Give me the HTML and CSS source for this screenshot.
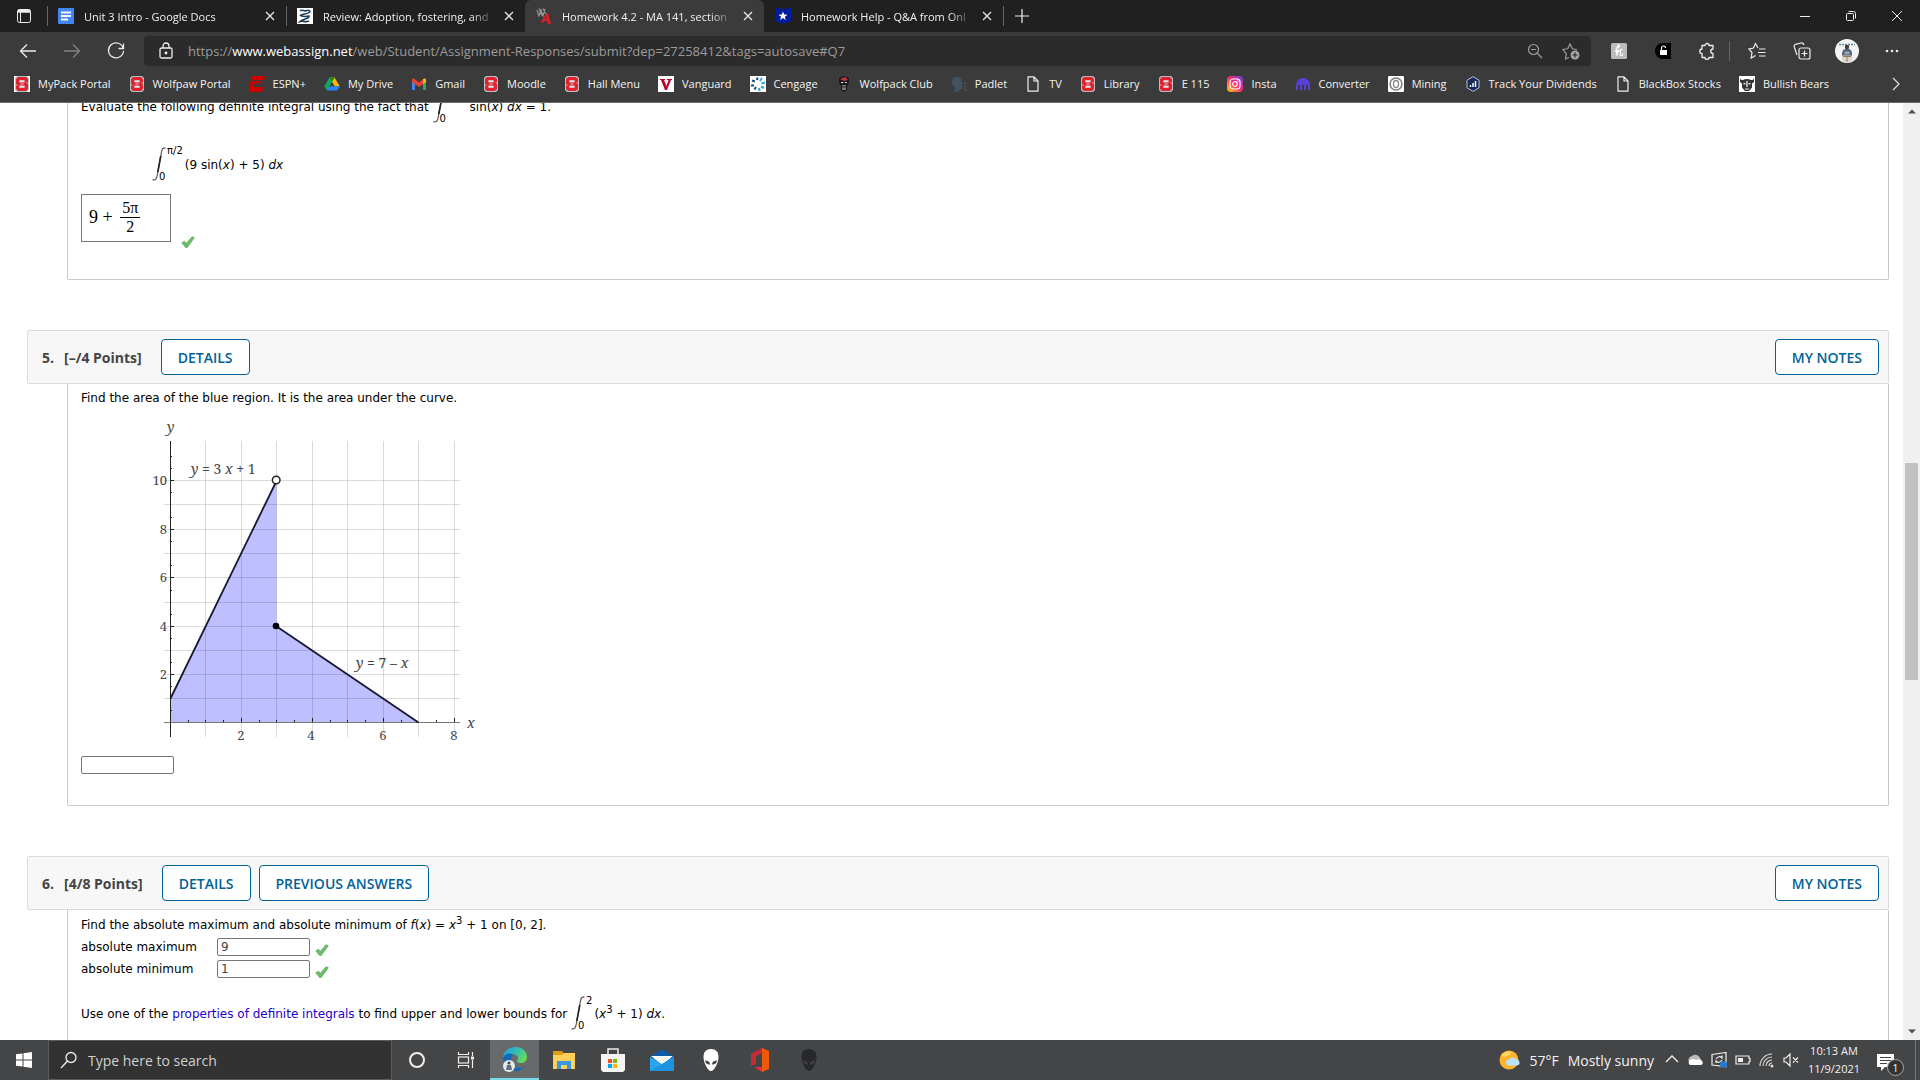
FILE: index.html
```html
<!DOCTYPE html>
<html lang="en">
<head>
    <meta charset="UTF-8">
    <meta name="viewport" content="width=device-width, initial-scale=1.0">
    <title>Homework 4.2 - MA 141, section</title>
    <link rel="stylesheet" href="styles.css">
</head>
<body>
    <!-- Shared icons -->
    <svg class="sprite" aria-hidden="true">
        <symbol id="close" viewBox="0 0 16 16"><path d="M4 4l8 8M12 4l-8 8" stroke="#e8e8e8" stroke-width="1.3" fill="none"/></symbol>
        <symbol id="check" viewBox="0 0 14 12"><path d="M.8 6.800l2.700-1.500 2 1.900L11 .8l2.300.9-7 9.700H4.500z" fill="#6fbd6a" stroke="#5aa657" stroke-width=".7" stroke-linejoin="round"/></symbol>
        <symbol id="integral" viewBox="0 0 14 34"><path d="M13.500 1.200C10.500.5 10 2 9.300 6L5.300 28c-.7 4-1.800 5.500-4.800 4.800" fill="none" stroke="#555" stroke-width="1.200"/><path d="M8.800 9L5.800 25" stroke="#222" stroke-width="1.600"/></symbol>
        <symbol id="pack" viewBox="0 0 16 16"><path d="M3 0h10l2 2v12l-2 2H3l-2-2V2z" fill="#b9c0c2"/><path d="M4 1h8l2 2v3.500h-3.500V4.500h-5v2H12l2 1.500v5l-2 2H4l-2-2V9.500h3.500v2h5v-2H4L2 8V3z" fill="#e3222f"/><path d="M5.500 4.500h5v1.200h-5zM5.500 10.300h5v1.200h-5z" fill="#fff"/><path d="M6.500 8h3" stroke="#fff" stroke-width=".7"/></symbol>
        <symbol id="page" viewBox="0 0 16 16"><path d="M3 .8h6L13 5v10.200H3zM9 .8V5h4" fill="none" stroke="#eee" stroke-width="1.200" stroke-linejoin="round"/></symbol>
        <symbol id="alien" viewBox="0 0 16 22"><path d="M8 0c5 0 7.500 3 7.500 8 0 6-4.500 14-7.500 14S.5 14 .5 8C.5 3 3 0 8 0z"/><path d="M2 11.500c3 0 5 1.500 5 4-2.500.3-4.500-1-5-4zM14 11.500c-3 0-5 1.500-5 4 2.500.3 4.500-1 5-4z" fill="#404143"/></symbol>
    </svg>

    <!-- Tabs -->
    <div class="tab-bar">
        <button class="tab-actions" aria-label="Tab actions"><svg width="16" height="16" viewBox="0 0 16 16" fill="none" stroke="#eee"><rect x="1.500" y="1.500" width="13" height="13" rx="2"/><path d="M2 2.500h12M2 4h12" stroke-width="1.500"/><path d="M4.500 4v10"/></svg></button>
        <div class="tab">
            <svg class="favicon" viewBox="0 0 16 16"><rect width="16" height="16" rx="1" fill="#4285f4"/><path d="M3 4.500h10M3 8h10M3 11.500h7" stroke="#fff" stroke-width="1.800"/></svg>
            <span class="tab-title">Unit 3 Intro - Google Docs</span>
            <button class="tab-close" aria-label="Close tab"><svg><use href="#close"/></svg></button>
        </div>
        <div class="tab">
            <svg class="favicon" viewBox="0 0 16 16"><rect width="16" height="16" fill="#fff"/><path d="M3 3c2-2 4 .5 6-.3 2-.7 3.500-.2 4 .8-1.500 3-8 2-9.500 4 2.500 1 4.500 1.500 8.500.5 1 3-7 2.500-9 5.500 3-1.500 5 1.500 9-.5" fill="none" stroke="#1c3f5e" stroke-width="1.600"/></svg>
            <span class="tab-title">Review: Adoption, fostering, and</span>
            <button class="tab-close" aria-label="Close tab"><svg><use href="#close"/></svg></button>
        </div>
        <div class="tab active">
            <svg class="favicon" viewBox="0 0 16 16"><path d="M1 2l2 6 2-6 2 6 2-7M3 .5l3 7M7 .5l3 6" fill="none" stroke="#999" stroke-width="1.100"/><path d="M5 14l5-8 2-1 3 11h-3l-.7-3H8.500l-1.500 2z" fill="#e51c23"/><path d="M10.500 8.500l-1.300 2.500h1.800z" fill="#3b3b3b"/></svg>
            <span class="tab-title">Homework 4.2 - MA 141, section</span>
            <button class="tab-close" aria-label="Close tab"><svg><use href="#close"/></svg></button>
        </div>
        <div class="tab">
            <svg class="favicon" viewBox="0 0 16 16"><path d="M0 0l8 1 8-1v13l-8 3-8-3z" fill="#001c9c"/><path d="M8 3.500l1.200 3 3.300.2-2.600 2 .9 3.200L8 10.100l-2.800 1.800.9-3.200-2.600-2 3.300-.2z" fill="#fff"/></svg>
            <span class="tab-title">Homework Help - Q&amp;A from Onl</span>
            <button class="tab-close" aria-label="Close tab"><svg><use href="#close"/></svg></button>
        </div>
        <button class="new-tab" aria-label="New tab"><svg width="16" height="16" viewBox="0 0 16 16" stroke="#eee" stroke-width="1.200"><path d="M8 1v14M1 8h14"/></svg></button>
        <div class="window-controls">
            <button aria-label="Minimize"><svg viewBox="0 0 12 12"><path d="M1 6.500h10"/></svg></button>
            <button aria-label="Restore"><svg viewBox="0 0 12 12"><rect x="1.500" y="3.500" width="7" height="7" rx="1"/><path d="M3.500 1.500h5q2 0 2 2v5"/></svg></button>
            <button aria-label="Close"><svg viewBox="0 0 12 12"><path d="M1 1l10 10M11 1L1 11"/></svg></button>
        </div>
    </div>

    <!-- Toolbar -->
    <div class="toolbar">
        <div class="nav-buttons">
            <button aria-label="Back"><svg viewBox="0 0 18 18"><path d="M17 9H1.500M8 2.500L1.500 9 8 15.500"/></svg></button>
            <button aria-label="Forward" disabled><svg viewBox="0 0 18 18"><path d="M1 9h15.500M10 2.500L16.500 9 10 15.500"/></svg></button>
            <button aria-label="Refresh"><svg viewBox="0 0 18 18"><path d="M16.300 6.500A7.500 7.500 0 1 0 16.500 9M16.500 1.500v5h-5"/></svg></button>
        </div>
        <div class="address-bar">
            <svg class="lock" viewBox="0 0 16 18" fill="none" stroke="#eee" stroke-width="1.300"><rect x="2" y="6" width="12" height="10" rx="1.500"/><path d="M5 6V4a3 3 0 0 1 6 0v2"/><circle cx="8" cy="11" r=".8" fill="#eee"/></svg>
            <div class="url">https://<b>www.webassign.net</b>/web/Student/Assignment-Responses/submit?dep=27258412&amp;tags=autosave#Q7</div>
            <div class="address-actions">
                <button aria-label="Zoom out"><svg width="16" height="16" viewBox="0 0 16 16" fill="none" stroke="#9a9a9a" stroke-width="1.200"><circle cx="6.500" cy="6.500" r="5"/><path d="M10 10l5 5M4 6.500h5"/></svg></button>
                <button aria-label="Add to favorites"><svg width="18" height="18" viewBox="0 0 18 18" fill="none" stroke="#9a9a9a" stroke-width="1.200"><path d="M7 15.500l-3.500 1.500.8-5L1 7.500l4.700-.7L8 2l2.300 4.800L15 7.500"/><circle cx="13" cy="13" r="4.500" fill="#a5a5a5" stroke="none"/><path d="M13 10.500v5M10.500 13h5" stroke="#2b2b2b"/></svg></button>
            </div>
        </div>
        <div class="extensions">
            <button aria-label="Honey"><svg width="16" height="16" viewBox="0 0 16 16"><rect width="16" height="16" rx="1.500" fill="#bcbcbc"/><path d="M4.500 5.500c3-.5 5-3 3.500-3.500S5.500 6 5.500 12.500c1-4 3.500-6 4-4.500.4 1.300-1.300 4 0 4.500 1 .3 2-.8 2.500-1.800M3.500 8c3 .5 6-.5 7.500-2" fill="none" stroke="#fff" stroke-width="1.200"/></svg></button>
            <button aria-label="Unlock"><svg width="16" height="16" viewBox="0 0 16 16"><path d="M8 0h8v16H8A8 8 0 0 1 8 0z" fill="#000"/><rect x="5" y="7" width="7" height="5" fill="#fff"/><path d="M6.500 7V5a2 2 0 0 1 4 0" fill="none" stroke="#fff" stroke-width="1.200"/></svg></button>
            <button aria-label="Extensions"><svg width="18" height="18" viewBox="0 0 18 18" fill="none" stroke="#eee" stroke-width="1.300"><path d="M4 3.500h3a2 2 0 0 1 4 0h4V7a2 2 0 0 0 0 4.500v4h-4a2 2 0 0 1-4 0H4v-4A2 2 0 0 1 4 7z" stroke-linejoin="round"/></svg></button>
        </div>
        <div class="browser-menu">
            <button aria-label="Favorites"><svg width="18" height="18" viewBox="0 0 18 18" fill="none" stroke="#eee" stroke-width="1.200"><path d="M10 6L7.500 1.500 5.500 6 1 7l3 3.500-.8 5.500 4.300-2.500M11 7h6.500M10 10.500h7.500M11 14h6.500"/></svg></button>
            <button aria-label="Collections"><svg width="18" height="18" viewBox="0 0 18 18" fill="none" stroke="#eee" stroke-width="1.200"><rect x="6" y="6" width="11" height="11" rx="2"/><path d="M11.500 8.500v6M8.500 11.500h6M4 13L1.300 5q-.6-2 1.200-2.700L8 1q2-.5 3 2"/></svg></button>
            <button aria-label="Profile"><svg width="24" height="24" viewBox="0 0 24 24"><circle cx="12" cy="12" r="12" fill="#f2f4f5"/><path d="M4 5.500h16" stroke="#6489a0" stroke-width="1.500" stroke-dasharray="2 1"/><path d="M7 15q0-4 3-5h4q3 1 3 5v3H7z" fill="#53637c"/><circle cx="12" cy="8" r="2.200" fill="#463c39"/><path d="M9.500 12.500h5v3h-5z" fill="#9ca6ae"/><path d="M7 16.500h10V22q-5 2-10 0z" fill="#dcd6c6"/><path d="M8 17.500h8M12 17v6" stroke="#8b7f5d"/></svg></button>
            <button aria-label="Settings"><svg width="18" height="18" viewBox="0 0 18 18" fill="#eee"><circle cx="4" cy="9" r="1.300"/><circle cx="9" cy="9" r="1.300"/><circle cx="14" cy="9" r="1.300"/></svg></button>
        </div>
    </div>

    <!-- Bookmarks -->
    <nav class="bookmarks">
        <a href="#"><svg viewBox="0 0 16 16"><rect width="16" height="16" fill="#fff"/><use href="#pack"/></svg>MyPack Portal</a>
        <a href="#"><svg><use href="#pack"/></svg>Wolfpaw Portal</a>
        <a href="#"><svg viewBox="0 0 16 16"><path d="M2.500 0H16l-.7 4H1.700zM1.500 5h10.500l-.5 2.500H5L4.500 11H14l-.8 5H0z" fill="#d00000"/></svg>ESPN+</a>
        <a href="#"><svg viewBox="0 0 16 16"><path d="M5.500 1.500L8 6l-5 8.500L.3 10.200z" fill="#0da960"/><path d="M5.500 1.500h5l5.200 8.700h-5z" fill="#ffba00"/><path d="M5.500 10.200h10.200L13 14.500H3z" fill="#2684fc"/><path d="M5.500 1.500h5L8 6z" fill="#00832d"/></svg>My Drive</a>
        <a href="#"><svg viewBox="0 0 16 16"><path d="M1 4h3v10H1z" fill="#4285f4"/><path d="M12 4h3v10h-3z" fill="#34a853"/><path d="M1 4q0-2 2-1.500l5 4 5-4q2-.5 2 1.500v2l-7 5-7-5z" fill="#ea4335"/><path d="M12 3.300q3-2 3 .7v2l-3 2.200z" fill="#fbbc04"/></svg>Gmail</a>
        <a href="#"><svg><use href="#pack"/></svg>Moodle</a>
        <a href="#"><svg><use href="#pack"/></svg>Hall Menu</a>
        <a href="#"><svg viewBox="0 0 16 16"><rect width="16" height="16" fill="#fff"/><path d="M2 3h5v1H6l2.500 6L10.500 4H9V3h5v1h-1L9 14H7L3 4H2z" fill="#c20029"/></svg>Vanguard</a>
        <a href="#"><svg viewBox="0 0 16 16"><rect width="16" height="16" fill="#fff"/><g stroke-width="2"><path d="M2 4.500l3 1M4 9.500H1M4.500 13.500l1.500-2.500M7.500 1.500L7 4" stroke="#0f4d80"/><path d="M12 2l-2 3M15 6.500l-3.500 1M14 12l-3-1.500M9.500 15L9 12" stroke="#2ba7df"/></g></svg>Cengage</a>
        <a href="#"><svg viewBox="0 0 16 16"><path d="M3 2l5-2 5 2v5l-2 3v4l-3 2-3-2v-4L3 7z" fill="#191919"/><path d="M4 3l5-2 3 3-4 1z" fill="#c9333e"/><path d="M5 6.500h2.500M9 6.500h2" stroke="#ddd"/><path d="M6 9h4v5H6z" fill="#777"/><path d="M6 11h4" stroke="#222"/></svg>Wolfpack Club</a>
        <a href="#"><svg viewBox="0 0 16 16"><path d="M6 1c4 0 5 3 5 5l1 3-1 1v3H9l-1 3H3l1-5C-1 8 0 1 6 1z" fill="#43535e"/><path d="M13 7h2M13 10l2 1M13 13l2 1" stroke="#53636d"/></svg>Padlet</a>
        <a href="#"><svg><use href="#page"/></svg>TV</a>
        <a href="#"><svg><use href="#pack"/></svg>Library</a>
        <a href="#"><svg><use href="#pack"/></svg>E 115</a>
        <a href="#"><svg viewBox="0 0 16 16"><defs><linearGradient id="insta" x1="0" y1="1" x2="1" y2="0"><stop stop-color="#ffd600"/><stop offset=".5" stop-color="#ff2874"/><stop offset="1" stop-color="#5c45e5"/></linearGradient></defs><rect width="16" height="16" rx="4" fill="url(#insta)"/><rect x="3" y="3" width="10" height="10" rx="3" fill="none" stroke="#fff" stroke-width="1.200"/><circle cx="8" cy="8" r="2.300" fill="none" stroke="#fff" stroke-width="1.200"/><circle cx="11" cy="5" r=".7" fill="#fff"/></svg>Insta</a>
        <a href="#"><svg viewBox="0 0 16 16"><path d="M1 9a7 7 0 0 1 14 0v5h-2V9h-2v5H9V9H7v5H5V9H3v5H1z" fill="#5841d8"/></svg>Converter</a>
        <a href="#"><svg viewBox="0 0 16 16"><rect width="16" height="16" rx="1" fill="#fff"/><circle cx="8" cy="8" r="6" fill="none" stroke="#808080" stroke-width="1.500"/><ellipse cx="8" cy="8" rx="2.500" ry="3.500" fill="none" stroke="#888" stroke-width="1.300"/></svg>Mining</a>
        <a href="#"><svg viewBox="0 0 16 16"><path d="M8 .7l6 3.500v7.600l-6 3.500-6-3.500V4.200z" fill="#172a58" stroke="#b6c4da"/><path d="M5.500 11V9M8 11V7M10.500 11V5" stroke="#fff" stroke-width="1.500"/></svg>Track Your Dividends</a>
        <a href="#"><svg><use href="#page"/></svg>BlackBox Stocks</a>
        <a href="#"><svg viewBox="0 0 16 16"><rect width="16" height="16" fill="#fff"/><path d="M1 2q0 2 3 2 4-2 8 0 3 0 3-2v4l-2 1.500v4L10 15H6l-3-3.500v-4L1 6z" fill="#333"/><path d="M4.500 7h2v1.500h-2zM9.500 7h2v1.500h-2zM7.300 5h1.400v6H7.300zM6 12.500h4v1H6z" fill="#ddd"/></svg>Bullish Bears</a>
        <button class="more-bookmarks" aria-label="More favorites"><svg viewBox="0 0 16 16" fill="none" stroke="#ddd" stroke-width="1.300"><path d="M5 2l6 6-6 6"/></svg></button>
    </nav>

    <!-- Assignment -->
    <div class="viewport">
        <main class="assignment">
            <section class="question">
                <div class="question-body scrolled">
                    <p class="math-line"><span>Evaluate the following definite integral using the fact that </span><span class="integral wide"><svg><use href="#integral"/></svg><sup>π/2</sup><sub>0</sub></span><span>sin(<i>x</i>) <i>dx</i> = 1.</span></p>
                    <p class="math-line indented"><span class="integral"><svg><use href="#integral"/></svg><sup>π/2</sup><sub>0</sub></span><span>(9 sin(<i>x</i>) + 5) <i>dx</i></span></p>
                    <div class="answer-row">
                        <div class="math-answer">9 + <span class="fraction"><span>5π</span><span>2</span></span></div>
                        <svg class="check"><use href="#check"/></svg>
                    </div>
                </div>
            </section>

            <section class="question">
                <header class="question-header">
                    <h2><span>5.</span>[–/4 Points]</h2>
                    <button class="action">DETAILS</button>
                    <button class="action notes">MY NOTES</button>
                </header>
                <div class="question-body area">
                    <p><label for="area-answer">Find the area of the blue region. It is the area under the curve.</label></p>
                    <svg class="graph" viewBox="130 416 360 330" role="img" aria-label="Graph of a piecewise function">
                        <g stroke="#000" stroke-opacity=".14" stroke-width="1">
                            <path d="M205.500 441v296M241.500 441v296M276.500 441v296M312.500 441v296M347.500 441v296M383.500 441v296M418.500 441v296M454.500 441v296"/>
                            <path d="M164 480.500h296M164 504.500h296M164 529.500h296M164 553.500h296M164 577.500h296M164 602.500h296M164 626.500h296M164 650.500h296M164 674.500h296M164 698.500h296"/>
                        </g>
                        <path d="M170.500 698.500L276.500 480V626L418.500 722.500H170.500z" fill="#00f" fill-opacity=".25"/>
                        <path d="M164 722.500h296" stroke="#777"/>
                        <path d="M170.500 441v296" stroke="#222"/>
                        <path d="M171 674.500h3M171 626.500h3M171 577.500h3M171 529.500h3M171 480.500h3M171 710.500h1M171 686.500h1M171 662.500h1M171 638.500h1M171 614.500h1M171 590.500h1M171 565.500h1M171 541.500h1M171 517.500h1M171 492.500h1M171 468.500h1M171 456.500h1M241.500 722v-4M312.500 722v-4M383.500 722v-4M454.500 722v-4M188.500 722v-2M205.500 722v-2M223.500 722v-2M259.500 722v-2M276.500 722v-2M294.500 722v-2M330.500 722v-2M347.500 722v-2M365.500 722v-2M401.500 722v-2M436.500 722v-2" stroke="#222"/>
                        <path d="M170.500 698.500L276 482M276 626l142.500 96.500" stroke="#181830" stroke-width="1.800" fill="none"/>
                        <circle cx="276.200" cy="480" r="3.800" fill="#fff" stroke="#222" stroke-width="1.500"/>
                        <circle cx="276" cy="626" r="3.300"/>
                        <g class="axis-label" text-anchor="end"><text x="167" y="485">10</text><text x="167" y="534">8</text><text x="167" y="582">6</text><text x="167" y="631">4</text><text x="167" y="679">2</text></g>
                        <g class="axis-label" text-anchor="middle"><text x="241" y="740">2</text><text x="311" y="740">4</text><text x="383" y="740">6</text><text x="454" y="740">8</text></g>
                        <g class="curve-label"><text x="167" y="432" font-style="italic">y</text><text x="467" y="728" font-style="italic">x</text>
                        <text x="191" y="474"><tspan font-style="italic">y</tspan> = 3 <tspan font-style="italic">x</tspan> + 1</text>
                        <text x="356" y="668"><tspan font-style="italic">y</tspan> = 7 – <tspan font-style="italic">x</tspan></text></g>
                    </svg>
                    <input class="answer" id="area-answer" type="text">
                </div>
            </section>

            <section class="question">
                <header class="question-header">
                    <h2><span>6.</span>[4/8 Points]</h2>
                    <button class="action">DETAILS</button>
                    <button class="action">PREVIOUS ANSWERS</button>
                    <button class="action notes">MY NOTES</button>
                </header>
                <div class="question-body extrema">
                    <p>Find the absolute maximum and absolute minimum of <i>f</i>(<i>x</i>) = <i>x</i><sup>3</sup> + 1 on [0, 2].</p>
                    <div class="field">
                        <label for="max-answer">absolute maximum</label>
                        <input class="answer" id="max-answer" type="text" value="9">
                        <svg class="check"><use href="#check"/></svg>
                    </div>
                    <div class="field">
                        <label for="min-answer">absolute minimum</label>
                        <input class="answer" id="min-answer" type="text" value="1">
                        <svg class="check"><use href="#check"/></svg>
                    </div>
                    <p class="math-line bounds"><span>Use one of the <a href="#">properties of definite integrals</a> to find upper and lower bounds for </span><span class="integral"><svg><use href="#integral"/></svg><sup>2</sup><sub>0</sub></span><span>(<i>x</i><sup>3</sup> + 1) <i>dx</i>.</span></p>
                </div>
            </section>
        </main>
        <div class="scrollbar">
            <svg viewBox="0 0 8 5"><path d="M0 4.500h8L4 .5z" fill="#505050"/></svg>
            <div class="scroll-track"><div class="scroll-thumb"></div></div>
            <svg viewBox="0 0 8 5"><path d="M0 .5h8L4 4.500z" fill="#505050"/></svg>
        </div>
    </div>

    <!-- Taskbar -->
    <footer class="taskbar">
        <button class="start" aria-label="Start"><svg width="16" height="16" viewBox="0 0 16 16" fill="#fff"><path d="M0 2.300L6.500 1.400V7.500H0zM7.500 1.200L16 0v7.500H7.500zM0 8.500h6.500v6.100L0 13.700zM7.500 8.500H16V16l-8.500-1.200z"/></svg></button>
        <label class="search">
            <svg width="18" height="18" viewBox="0 0 18 18" fill="none" stroke="#eee" stroke-width="1.300"><circle cx="11" cy="6.500" r="5"/><path d="M7.500 10L1 17"/></svg>
            <input type="text" placeholder="Type here to search" aria-label="Search">
        </label>
        <div class="apps">
            <button aria-label="Cortana"><svg width="18" height="18" viewBox="0 0 18 18"><circle cx="9" cy="9" r="7" fill="none" stroke="#eee" stroke-width="2"/></svg></button>
            <button aria-label="Task view"><svg width="18" height="18" viewBox="0 0 18 18" fill="none" stroke="#eee" stroke-width="1.200"><path d="M1.500 1v2.500h10V1M1.500 17v-2.500h10V17M15.500 1v4M15.500 9v8"/><rect x="1.500" y="6" width="10" height="6"/><path d="M14 7h3" stroke-width="3"/></svg></button>
            <button class="running" aria-label="Microsoft Edge"><svg width="26" height="26" viewBox="0 0 26 26"><defs><linearGradient id="edge" x1="0" y1="0" x2="1" y2=".5"><stop stop-color="#239ae0"/><stop offset=".6" stop-color="#35c1b0"/><stop offset="1" stop-color="#65d95a"/></linearGradient></defs><path d="M1 13C1 5 7 1 13 1c8 0 12 5 12 10 0 4-3 6-6 6-3 0-4-1-4-2 0-1 1-1 1-3 0-2-3-4-6-4-5 0-8 3-9 5z" fill="url(#edge)"/><path d="M1 12c1-4 7-6 10-3-3 2-4 11 5 13 3 .5 5-.5 7-2-2 4-7 5-10 5C5 25 1 19 1 12z" fill="#1268b8"/><circle cx="7" cy="20" r="6" fill="#e5eaee"/><circle cx="7" cy="17" r="1.500" fill="#444"/><path d="M4 24l1-5h4l1 5z" fill="#5e6f82"/></svg></button>
            <button aria-label="File Explorer"><svg width="22" height="20" viewBox="0 0 22 20"><path d="M0 1h9l2 3h11v4H0z" fill="#e09b12"/><path d="M0 5h9l2-2h11v16H0z" fill="#ffd05a"/><path d="M4 19v-8h14v8h-4v-4H8v4z" fill="#3999de"/></svg></button>
            <button aria-label="Microsoft Store"><svg width="24" height="24" viewBox="0 0 24 24"><path d="M7 7V1h10v6" fill="none" stroke="#eee" stroke-width="1.500"/><path d="M0 6h24v16l-2 2H2l-2-2z" fill="#f5f5f5"/><path d="M7 11h4v4H7z" fill="#f25022"/><path d="M12 11h4v4h-4z" fill="#7fba00"/><path d="M7 16h4v4H7z" fill="#00a4ef"/><path d="M12 16h4v4h-4z" fill="#ffb900"/></svg></button>
            <button aria-label="Mail"><svg width="24" height="22" viewBox="0 0 24 22"><path d="M0 8L12 0l12 8v14H0z" fill="#0c5aa8"/><path d="M1 7h22L12 16z" fill="#fff"/><path d="M0 8l12 7L24 8v14H0z" fill="#2aa6ee"/><path d="M3 8h18l-9 7z" fill="#f4f4f4"/><path d="M0 22l24-14v14z" fill="#1f92e0"/></svg></button>
            <button aria-label="Alienware"><svg width="16" height="22" fill="#fff"><use href="#alien"/></svg></button>
            <button aria-label="Office"><svg width="18" height="24" viewBox="0 0 18 24"><path d="M0 6L11 0v5L5 8v8l-5 2z" fill="#c62b35"/><path d="M11 0l7 3v18l-7 3z" fill="#ef5808"/><path d="M3 19h8v5z" fill="#e72849"/></svg></button>
            <button aria-label="Alienware Command Center"><svg width="16" height="22" fill="#28292a"><use href="#alien"/></svg></button>
        </div>
        <div class="tray">
            <button class="weather"><svg width="21" height="20" viewBox="0 0 21 20"><circle cx="10" cy="10" r="9.500" fill="#ffb32c"/><path d="M2 6q4-6 11-4-4 6-11 4z" fill="#ffd65e"/><path d="M10 15.500a3 3 0 0 1 0-6 4 4 0 0 1 7 0 3 3 0 0 1 1 6z" fill="#b9e2fb"/></svg><span>57°F</span><span>Mostly sunny</span></button>
            <button aria-label="Show hidden icons"><svg width="14" height="16" viewBox="0 0 14 16" fill="none" stroke="#eee" stroke-width="1.300"><path d="M1 10l6-6 6 6"/></svg></button>
            <button aria-label="OneDrive"><svg width="16" height="16" viewBox="0 0 16 16"><path d="M2 10a4 4 0 0 1 3-6 5 5 0 0 1 8 2l2 4z" fill="#bbb"/><path d="M3 13a3 3 0 0 1 0-5q3-2 6 0 4-2 6 1 2 3-1 4z" fill="#fff"/></svg></button>
            <button aria-label="Windows Update"><svg width="16" height="16" viewBox="0 0 16 16" fill="none" stroke="#eee" stroke-width="1.200"><path d="M1 2.500l14-2v14L1 13zM5 7q3-4 6-1V3.500M11 8q-3 4-6 1V11"/><circle cx="12.500" cy="12.500" r="3.500" fill="#2677ce" stroke="none"/></svg></button>
            <button aria-label="Battery"><svg width="16" height="16" viewBox="0 0 16 16" fill="none" stroke="#eee" stroke-width="1.200"><path d="M1 4h13v2.500h1v3h-1V12H1z"/><path d="M3 6h5v4H3z" fill="#eee" stroke="none"/></svg></button>
            <button aria-label="Network"><svg width="16" height="16" viewBox="0 0 16 16" fill="none" stroke="#ddd" stroke-width="1.100"><path d="M1 14A12 12 0 0 1 13 2M4 14a9 9 0 0 1 9-9M7 14a6 6 0 0 1 6-6M10 14a3 3 0 0 1 3-3"/><circle cx="13" cy="14" r="1" fill="#eee"/></svg></button>
            <button aria-label="Volume muted"><svg width="16" height="16" viewBox="0 0 16 16" fill="none" stroke="#eee" stroke-width="1.200"><path d="M1 6h2l4-4v12l-4-4H1zM10 5.500l5 5M15 5.500l-5 5"/></svg></button>
            <div class="clock"><span>10:13 AM</span><span>11/9/2021</span></div>
            <button class="notifications" aria-label="Notifications"><svg width="17" height="17" viewBox="0 0 17 17"><path d="M0 0h17v13H8l-4 4v-4H0z" fill="#fff"/><path d="M3 3.500h11M3 6.500h11M3 9.500h7" stroke="#444"/></svg><span class="badge">1</span></button>
        </div>
    </footer>
</body>
</html>
```
FILE: styles.css
```css
* {
    margin: 0;
    padding: 0;
    box-sizing: border-box;
}

body {
    height: 100vh;
    display: flex;
    flex-direction: column;
    overflow: hidden;
    background-color: #ffffff;
    color: #000000;
    font-family: 'Open Sans', 'Noto Sans', sans-serif;
    font-size: 12px;
}

button {
    border: none;
    background: none;
    color: inherit;
    font: inherit;
}

svg {
    display: block;
    flex-shrink: 0;
}

.sprite {
    display: none;
}

/* Tabs */
.tab-bar {
    display: flex;
    align-items: stretch;
    height: 32px;
    flex-shrink: 0;
    background-color: #202020;
    color: #f0f0f0;
    font-size: 11px;
}

.tab-bar button {
    display: flex;
    align-items: center;
    justify-content: center;
}

.tab-actions {
    width: 47px;
}

.tab {
    display: flex;
    align-items: center;
    flex: 0 1 239px;
    min-width: 0;
    padding: 0 8px 0 10px;
    border-left: 1px solid #555555;
    border-image: linear-gradient(transparent 20%, #666 20%, #666 80%, transparent 80%) 1;
}

.tab.active {
    background-color: #3b3b3b;
    border-image: none;
    border-color: #3b3b3b;
    border-radius: 6px 6px 0 0;
}

.tab.active + .tab {
    border-color: transparent;
    border-image: none;
}

.favicon {
    width: 16px;
    height: 16px;
}

.tab-title {
    flex: 1;
    margin: 0 6px 0 10px;
    overflow: hidden;
    white-space: nowrap;
    -webkit-mask-image: linear-gradient(to left, transparent, #000 24px);
    mask-image: linear-gradient(to left, transparent, #000 24px);
}

.tab-close svg {
    width: 16px;
    height: 16px;
}

.new-tab {
    width: 37px;
    border-left: 1px solid #555555;
    border-image: linear-gradient(transparent 20%, #666 20%, #666 80%, transparent 80%) 1;
}

.window-controls {
    display: flex;
    margin-left: auto;
}

.window-controls button {
    width: 46px;
}

.window-controls svg {
    width: 12px;
    height: 12px;
    fill: none;
    stroke: #eeeeee;
}

/* Toolbar */
.toolbar {
    display: flex;
    align-items: center;
    flex-shrink: 0;
    height: 38px;
    padding: 0 6px;
    background-color: #3b3b3b;
}

.toolbar button {
    display: flex;
    align-items: center;
    justify-content: center;
    width: 44px;
    height: 30px;
}

.nav-buttons,
.extensions,
.browser-menu {
    display: flex;
}

.nav-buttons svg {
    width: 18px;
    height: 18px;
    fill: none;
    stroke: #eeeeee;
    stroke-width: 1.3;
}

.nav-buttons button:disabled {
    opacity: 0.4;
}

.address-bar {
    display: flex;
    align-items: center;
    flex: 1;
    height: 30px;
    margin: 0 6px;
    padding-left: 14px;
    border-radius: 4px;
    background-color: #2b2b2b;
    color: #9b9b9b;
    font-size: 13px;
}

.lock {
    width: 16px;
    height: 18px;
    margin-right: 14px;
}

.url b {
    color: #ffffff;
    font-weight: 400;
}

.address-actions {
    display: flex;
    margin-left: auto;
    padding-right: 2px;
}

.address-actions button {
    width: 36px;
}

.browser-menu {
    border-left: 1px solid #666666;
    height: 20px;
    align-items: center;
    padding-left: 4px;
}

.browser-menu button {
    width: 45px;
}

/* Bookmarks */
.bookmarks {
    display: flex;
    align-items: center;
    flex-shrink: 0;
    gap: 18px;
    height: 33px;
    padding: 0 16px 5px 14px;
    border-bottom: 1px solid #6a6a6a;
    background-color: #3b3b3b;
    color: #f4f4f4;
    font-size: 11px;
}

.bookmarks a {
    display: flex;
    align-items: center;
    gap: 8px;
    color: inherit;
    text-decoration: none;
    white-space: nowrap;
}

.bookmarks svg {
    width: 16px;
    height: 16px;
}

.more-bookmarks {
    margin-left: auto;
}

/* Assignment */
.viewport {
    display: flex;
    flex: 1;
    min-height: 0;
    overflow: hidden;
}

.assignment {
    flex: 1;
    padding: 0 14px 0 27px;
    overflow: hidden;
    font-family: Verdana, 'DejaVu Sans', sans-serif;
    font-size: 12px;
}

.question {
    margin-bottom: 50px;
}

.question-header {
    display: flex;
    align-items: center;
    gap: 8px;
    height: 54px;
    padding: 0 9px 0 14px;
    border: 1px solid #dcdcdc;
    border-radius: 2px;
    background-color: #f7f7f7;
    font-family: 'Open Sans', sans-serif;
}

.question-header h2 {
    margin-right: 11px;
    color: #444444;
    font-size: 14px;
    font-weight: 700;
}

.question-header h2 span {
    margin-right: 10px;
}

.action {
    height: 36px;
    padding: 0 16px;
    border: 1px solid #006298;
    border-radius: 4px;
    background-color: #ffffff;
    color: #006298;
    font-size: 14px;
    font-weight: 600;
}

.notes {
    margin-left: auto;
}

.question-body {
    margin-left: 40px;
    padding: 0 13px;
    border: 1px solid #c8c8c8;
    border-top: none;
    border-radius: 0 0 2px 2px;
}

.scrolled {
    margin-top: -14px;
    padding-bottom: 37px;
}

.math-line {
    display: flex;
    align-items: center;
    height: 36px;
    white-space: pre;
}

.math-line.indented {
    margin: 22px 0 11px 71px;
}

/* Integral sign with its limits */
.integral {
    display: grid;
    grid-template-columns: 10px auto;
    grid-template-rows: 1fr auto;
    height: 36px;
    margin-right: 2px;
    line-height: 12px;
}

.integral svg {
    grid-row: 1 / 3;
    grid-column: 1;
    width: 14px;
    height: 34px;
}

.integral sup {
    grid-column: 2;
    padding-left: 5px;
    font-size: 10px;
    line-height: 8px;
}

.integral sub {
    grid-column: 2;
    margin-left: -3px;
    font-size: 10px;
}

.integral.wide {
    grid-template-columns: 10px 25px;
}

.answer-row {
    display: flex;
    align-items: flex-end;
    gap: 10px;
}

.math-answer {
    display: flex;
    align-items: center;
    width: 90px;
    height: 48px;
    padding: 0 7px 2px;
    border: 1px solid #777777;
    font-family: 'Liberation Serif', serif;
    font-size: 18px;
    white-space: pre;
}

.fraction {
    display: flex;
    flex-direction: column;
    margin-left: 3px;
    font-size: 16px;
    line-height: 18px;
    text-align: center;
}

.fraction span:first-child {
    padding: 0 2px;
    border-bottom: 1px solid #000000;
}

.check {
    width: 14px;
    height: 12px;
}

.answer-row .check {
    margin-bottom: -6px;
}

.area {
    padding-top: 6px;
    padding-bottom: 31px;
    line-height: 16px;
}

.graph {
    width: 360px;
    height: 330px;
    margin: 10px 0 10px 49px;
}

.axis-label,
.curve-label {
    fill: #444444;
    font-family: 'Noto Serif', 'DejaVu Serif', serif;
    font-size: 13px;
}

.curve-label {
    font-size: 14px;
}

.answer {
    display: block;
    width: 93px;
    height: 18px;
    padding: 0 3px;
    border: 1px solid #767676;
    border-radius: 2px;
    background-color: #ffffff;
    color: #444444;
    font-family: inherit;
    font-size: 12px;
}

.extrema {
    height: 200px;
    padding-top: 6px;
    line-height: 18px;
}

.extrema sup {
    font-size: 10px;
    line-height: 10px;
}

.field {
    display: flex;
    align-items: center;
    height: 18px;
    margin: 4px 0;
}

.field label {
    width: 136px;
}

.field .check {
    margin: 6px 0 0 5px;
}

.bounds {
    margin-top: 18px;
}

.bounds a {
    color: #1a00cc;
    text-decoration: none;
}

/* Scrollbar */
.scrollbar {
    display: flex;
    flex-direction: column;
    align-items: center;
    width: 17px;
    padding: 6px 2px;
    background-color: #f0f0f0;
}

.scrollbar svg {
    width: 8px;
    height: 5px;
}

.scroll-track {
    flex: 1;
    width: 13px;
    padding: 349px 0;
}

.scroll-thumb {
    height: 100%;
    background-color: #c1c1c1;
}

/* Taskbar */
.taskbar {
    display: flex;
    align-items: stretch;
    flex-shrink: 0;
    height: 40px;
    background-color: #444547;
    color: #f2f2f2;
}

.start {
    display: flex;
    align-items: center;
    justify-content: center;
    width: 48px;
}

.search {
    display: flex;
    align-items: center;
    gap: 10px;
    width: 344px;
    padding-left: 11px;
    border: 1px solid #5b5b5b;
    background-color: #323232;
}

.search input {
    flex: 1;
    min-width: 0;
    border: none;
    outline: none;
    background: none;
    color: #dddddd;
    font-family: inherit;
    font-size: 14px;
}

.search input::placeholder {
    color: #d0d0d0;
}

.apps {
    display: flex;
}

.apps button {
    display: flex;
    align-items: center;
    justify-content: center;
    width: 49px;
}

.apps .running {
    border-bottom: 2px solid #76dce8;
    background-color: #67696b;
}

.tray {
    display: flex;
    align-items: center;
    gap: 8px;
    margin-left: auto;
    padding-right: 4px;
}

.weather {
    display: flex;
    align-items: center;
    gap: 9px;
    margin-right: 3px;
    font-size: 14px;
}

.clock {
    display: flex;
    flex-direction: column;
    align-items: center;
    width: 54px;
    font-size: 11px;
    line-height: 18px;
}

.notifications {
    position: relative;
    width: 47px;
    height: 40px;
    padding: 4px 8px 0;
    border-right: 1px solid #777777;
}

.badge {
    position: absolute;
    right: 11px;
    bottom: 4px;
    width: 17px;
    height: 17px;
    border: 1px solid #aaaaaa;
    border-radius: 50%;
    background-color: #333333;
    font-size: 11px;
    line-height: 15px;
    text-align: center;
}
```
